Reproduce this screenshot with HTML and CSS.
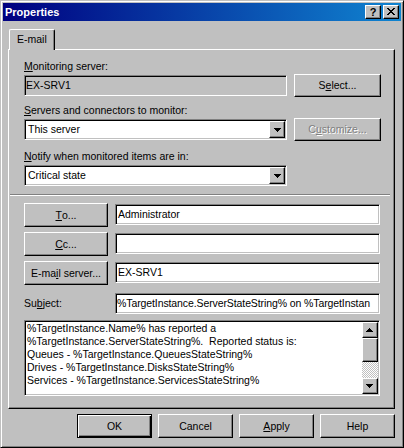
FILE: index.html
```html
<!DOCTYPE html>
<html>
<head>
<meta charset="utf-8">
<link rel="stylesheet" href="styles.css">
</head>
<body>
<div class="window">
  <div class="titlebar">
    <span class="title">Properties</span>
    <div class="tbtns">
      <div class="tbtn help">?</div>
      <div class="tbtn close">
        <svg width="8" height="7" viewBox="0 0 8 7" shape-rendering="crispEdges"><path fill="#000" d="M0 0h2v1H0z M6 0h2v1H6z M1 1h2v1H1z M5 1h2v1H5z M2 2h4v1H2z M3 3h2v1H3z M2 4h4v1H2z M1 5h2v1H1z M5 5h2v1H5z M0 6h2v1H0z M6 6h2v1H6z"/></svg>
      </div>
    </div>
  </div>
  <div class="client">
    <div class="tabs"><div class="tab">E-mail</div></div>
    <div class="panel">
      <div class="label"><u>M</u>onitoring server:</div>
      <div class="row r1">
        <div class="field ro">EX-SRV1</div>
        <div class="btn sbtn">S<u>e</u>lect...</div>
      </div>
      <div class="label l2"><u>S</u>ervers and connectors to monitor:</div>
      <div class="row r2">
        <div class="combo"><span class="ctext">This server</span><div class="ddbtn"><svg width="7" height="4" viewBox="0 0 7 4" shape-rendering="crispEdges"><path fill="#000" d="M0 0h7v1H0z M1 1h5v1H1z M2 2h3v1H2z M3 3h1v1H3z"/></svg></div></div>
        <div class="btn sbtn disabled">C<u>u</u>stomize...</div>
      </div>
      <div class="label l3"><u>N</u>otify when monitored items are in:</div>
      <div class="row r3">
        <div class="combo"><span class="ctext">Critical state</span><div class="ddbtn"><svg width="7" height="4" viewBox="0 0 7 4" shape-rendering="crispEdges"><path fill="#000" d="M0 0h7v1H0z M1 1h5v1H1z M2 2h3v1H2z M3 3h1v1H3z"/></svg></div></div>
      </div>
      <div class="sep"></div>
      <div class="mrow first">
        <div class="btn mbtn"><u>T</u>o...</div>
        <div class="field edit">Administrator</div>
      </div>
      <div class="mrow">
        <div class="btn mbtn"><u>C</u>c...</div>
        <div class="field edit"></div>
      </div>
      <div class="mrow">
        <div class="btn mbtn">E-ma<u>i</u>l server...</div>
        <div class="field edit">EX-SRV1</div>
      </div>
      <div class="srow">
        <div class="slabel">Su<u>b</u>ject:</div>
        <div class="field edit subj">%TargetInstance.ServerStateString% on %TargetInstan</div>
      </div>
      <div class="memo">
        <div class="mtext">%TargetInstance.Name% has reported a
%TargetInstance.ServerStateString%.  Reported status is:
Queues - %TargetInstance.QueuesStateString%
Drives - %TargetInstance.DisksStateString%
Services - %TargetInstance.ServicesStateString%</div>
        <div class="vscroll">
          <div class="sbbtn"><svg width="7" height="4" viewBox="0 0 7 4" shape-rendering="crispEdges"><path fill="#000" d="M3 0h1v1H3z M2 1h3v1H2z M1 2h5v1H1z M0 3h7v1H0z"/></svg></div>
          <div class="thumb"></div>
          <div class="track"></div>
          <div class="sbbtn"><svg width="7" height="4" viewBox="0 0 7 4" shape-rendering="crispEdges"><path fill="#000" d="M0 0h7v1H0z M1 1h5v1H1z M2 2h3v1H2z M3 3h1v1H3z"/></svg></div>
        </div>
      </div>
    </div>
    <div class="dlgbtns">
      <div class="btn dbtn default">OK</div>
      <div class="btn dbtn">Cancel</div>
      <div class="btn dbtn"><u>A</u>pply</div>
      <div class="btn dbtn">Help</div>
    </div>
  </div>
</div>
</body>
</html>
```
FILE: styles.css
```css
* { box-sizing: border-box; }
html, body { margin: 0; padding: 0; }
body {
  background: #c0c0c0;
  font-family: "Liberation Sans", Arial, sans-serif;
  font-size: 10.5px;
  line-height: 13px;
  color: #000;
}
u { text-decoration-thickness: 1px; text-underline-offset: 1px; }

.window {
  width: 404px;
  height: 448px;
  border: 1px solid;
  border-color: #c0c0c0 #000 #000 #c0c0c0;
  box-shadow: inset 1px 1px #fff, inset -1px -1px #808080;
  padding: 2px;
  display: flex;
  flex-direction: column;
  background: #c0c0c0;
}

.titlebar {
  height: 18px;
  flex: none;
  background: linear-gradient(90deg, #000080, #1084d0);
  display: flex;
  align-items: center;
  padding: 0 2px;
}
.title {
  flex: 1;
  color: #fff;
  font-weight: bold;
  font-size: 11px;
}
.tbtns { display: flex; gap: 2px; }
.tbtn {
  width: 16px;
  height: 14px;
  background: #c0c0c0;
  border: 1px solid;
  border-color: #fff #000 #000 #fff;
  box-shadow: inset -1px -1px #808080;
}
.help {
  font-weight: bold;
  font-size: 11px;
  line-height: 12px;
  text-align: center;
}
.close { padding: 2px 0 0 3px; }
.close svg { display: block; }

.client {
  flex: 1;
  display: flex;
  flex-direction: column;
  padding: 8px 6px 0 5px;
}
.tabs {
  display: flex;
  padding-left: 1px;
  margin-bottom: -1px;
  position: relative;
  z-index: 1;
}
.tab {
  height: 21px;
  padding: 3px 7px 0;
  border: 1px solid;
  border-bottom: none;
  border-color: #fff #000 #000 #fff;
  border-radius: 2px 2px 0 0;
  box-shadow: inset -1px 0 #808080;
  background: #c0c0c0;
}

.panel {
  border: 1px solid;
  border-color: #fff #000 #000 #fff;
  box-shadow: inset -1px -1px #808080;
  padding: 10px 14px 12px 15px;
  display: flex;
  flex-direction: column;
}
.label { height: 13px; white-space: nowrap; }
.l2 { margin-top: 7px; }
.l3 { margin-top: 9px; }

.row { display: flex; align-items: center; gap: 7px; }
.r1 { margin-top: 1px; }
.r2 { margin-top: 1px; }
.r3 { margin-top: 2px; }

.field {
  height: 21px;
  background: #fff;
  border: 1px solid;
  border-color: #808080 #fff #fff #808080;
  box-shadow: inset 1px 1px #000, inset -1px -1px #c0c0c0;
  display: flex;
  align-items: center;
  white-space: nowrap;
  overflow: hidden;
}
.ro {
  flex: none;
  width: 263px;
  background: #c0c0c0;
  padding-left: 1px;
}
.edit { flex: 1; padding-left: 2px; margin-top: 1px; }
.subj { padding-left: 1px; letter-spacing: -0.1px; }

.combo {
  flex: none;
  width: 263px;
  height: 21px;
  background: #fff;
  border: 1px solid;
  border-color: #808080 #fff #fff #808080;
  box-shadow: inset 1px 1px #000, inset -1px -1px #c0c0c0;
  display: flex;
  align-items: center;
  padding: 0 1px 0 3px;
}
.ctext { flex: 1; white-space: nowrap; }
.ddbtn {
  width: 16px;
  height: 17px;
  background: #c0c0c0;
  border: 1px solid;
  border-color: #fff #000 #000 #fff;
  box-shadow: inset -1px -1px #808080;
  padding: 6px 0 0 4px;
}
.ddbtn svg, .sbbtn svg { display: block; }

.btn {
  background: #c0c0c0;
  border: 1px solid;
  border-color: #fff #000 #000 #fff;
  box-shadow: inset -1px -1px #808080;
  display: flex;
  align-items: center;
  justify-content: center;
  white-space: nowrap;
  flex: none;
}
.sbtn { width: 87px; height: 23px; }
.disabled { color: #808080; text-shadow: 1px 1px #fff; }

.sep {
  height: 2px;
  border-top: 1px solid #808080;
  border-bottom: 1px solid #fff;
  margin: 8px -10px 0 -14px;
}

.mrow { display: flex; align-items: flex-start; gap: 7px; margin-top: 5px; }
.mrow.first { margin-top: 7px; }
.mbtn { width: 84px; height: 24px; }

.srow { display: flex; align-items: center; gap: 7px; margin-top: 8px; }
.slabel { width: 84px; flex: none; }
.srow .edit { margin-top: 0; }

.memo {
  height: 76px;
  margin-top: 6px;
  background: #fff;
  border: 1px solid;
  border-color: #808080 #fff #fff #808080;
  box-shadow: inset 1px 1px #000, inset -1px -1px #c0c0c0;
  padding: 1px;
  display: flex;
}
.mtext {
  flex: 1;
  white-space: pre;
  overflow: hidden;
  padding-left: 1px;
}
.vscroll {
  width: 16px;
  flex: none;
  display: flex;
  flex-direction: column;
}
.sbbtn, .thumb {
  background: #c0c0c0;
  border: 1px solid;
  border-color: #fff #000 #000 #fff;
  box-shadow: inset -1px -1px #808080;
}
.sbbtn { height: 16px; padding: 5px 0 0 3px; }
.thumb { height: 24px; }
.track {
  flex: 1;
  background-color: #c0c0c0;
  background-image: conic-gradient(#fff 25%, #c0c0c0 0 50%, #fff 0 75%, #c0c0c0 0);
  background-size: 2px 2px;
}

.dlgbtns {
  display: flex;
  justify-content: flex-end;
  gap: 6px;
  margin-top: 5px;
}
.dbtn { width: 75px; height: 24px; }
.default {
  border: 1px solid #000;
  box-shadow: inset 1px 1px #fff, inset -1px -1px #000, inset -2px -2px #808080;
}
```
